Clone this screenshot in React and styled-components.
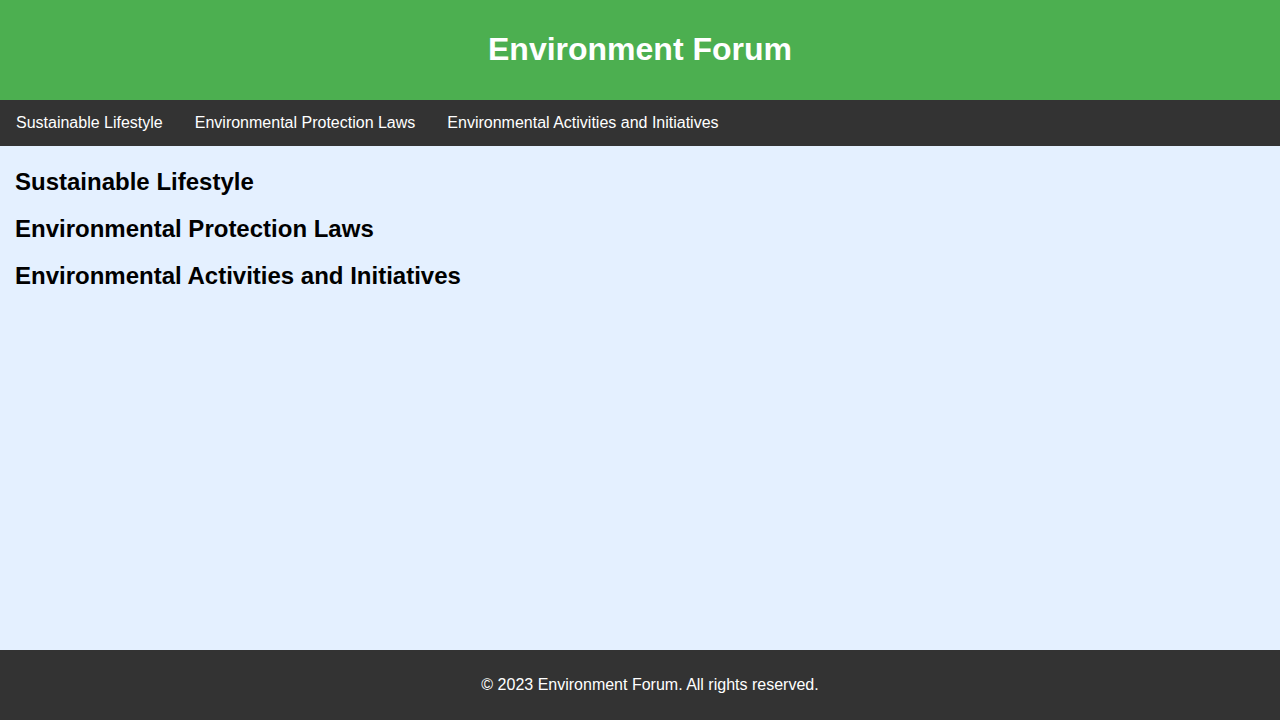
import React from "react";
import styled, { createGlobalStyle } from "styled-components";

const GlobalStyle = createGlobalStyle`
  body {
    margin: 0;
    font-family: "Liberation Sans", Arial, sans-serif;
    background-color: #e4f0ff;
  }
`;

const Header = styled.header({
  backgroundColor: "#4CAF50",
  color: "#FFFFFF",
  padding: "10px",
  textAlign: "center",
});

const Title = styled.h1({
  fontSize: "2em",
  margin: "0.67em 0",
});

const Nav = styled.nav({
  display: "flex",
  backgroundColor: "#333333",
});

const NavLink = styled.a({
  display: "block",
  color: "#FFFFFF",
  padding: "14px 16px 14px",
  lineHeight: "18.5px",
  textDecoration: "none",
  fontSize: "16px",
});

const Main = styled.main({
  padding: "2px 15px 0",
});

const SectionTitle = styled.h2({
  fontSize: "1.5em",
  lineHeight: "27px",
  margin: "0.83em 0",
});

const Footer = styled.footer({
  position: "fixed",
  left: 0,
  bottom: 0,
  width: "100%",
  backgroundColor: "#333333",
  color: "#FFFFFF",
  textAlign: "center",
  padding: "10px",
});

const sections = [
  "Sustainable Lifestyle",
  "Environmental Protection Laws",
  "Environmental Activities and Initiatives",
];

const App = () => (
  <>
    <GlobalStyle />
    <Header>
      <Title>Environment Forum</Title>
    </Header>
    <Nav>
      {sections.map((s) => (
        <NavLink key={s} href="#">
          {s}
        </NavLink>
      ))}
    </Nav>
    <Main>
      {sections.map((s) => (
        <SectionTitle key={s}>{s}</SectionTitle>
      ))}
    </Main>
    <Footer>
      <p>© 2023 Environment Forum. All rights reserved.</p>
    </Footer>
  </>
);

export default App;
